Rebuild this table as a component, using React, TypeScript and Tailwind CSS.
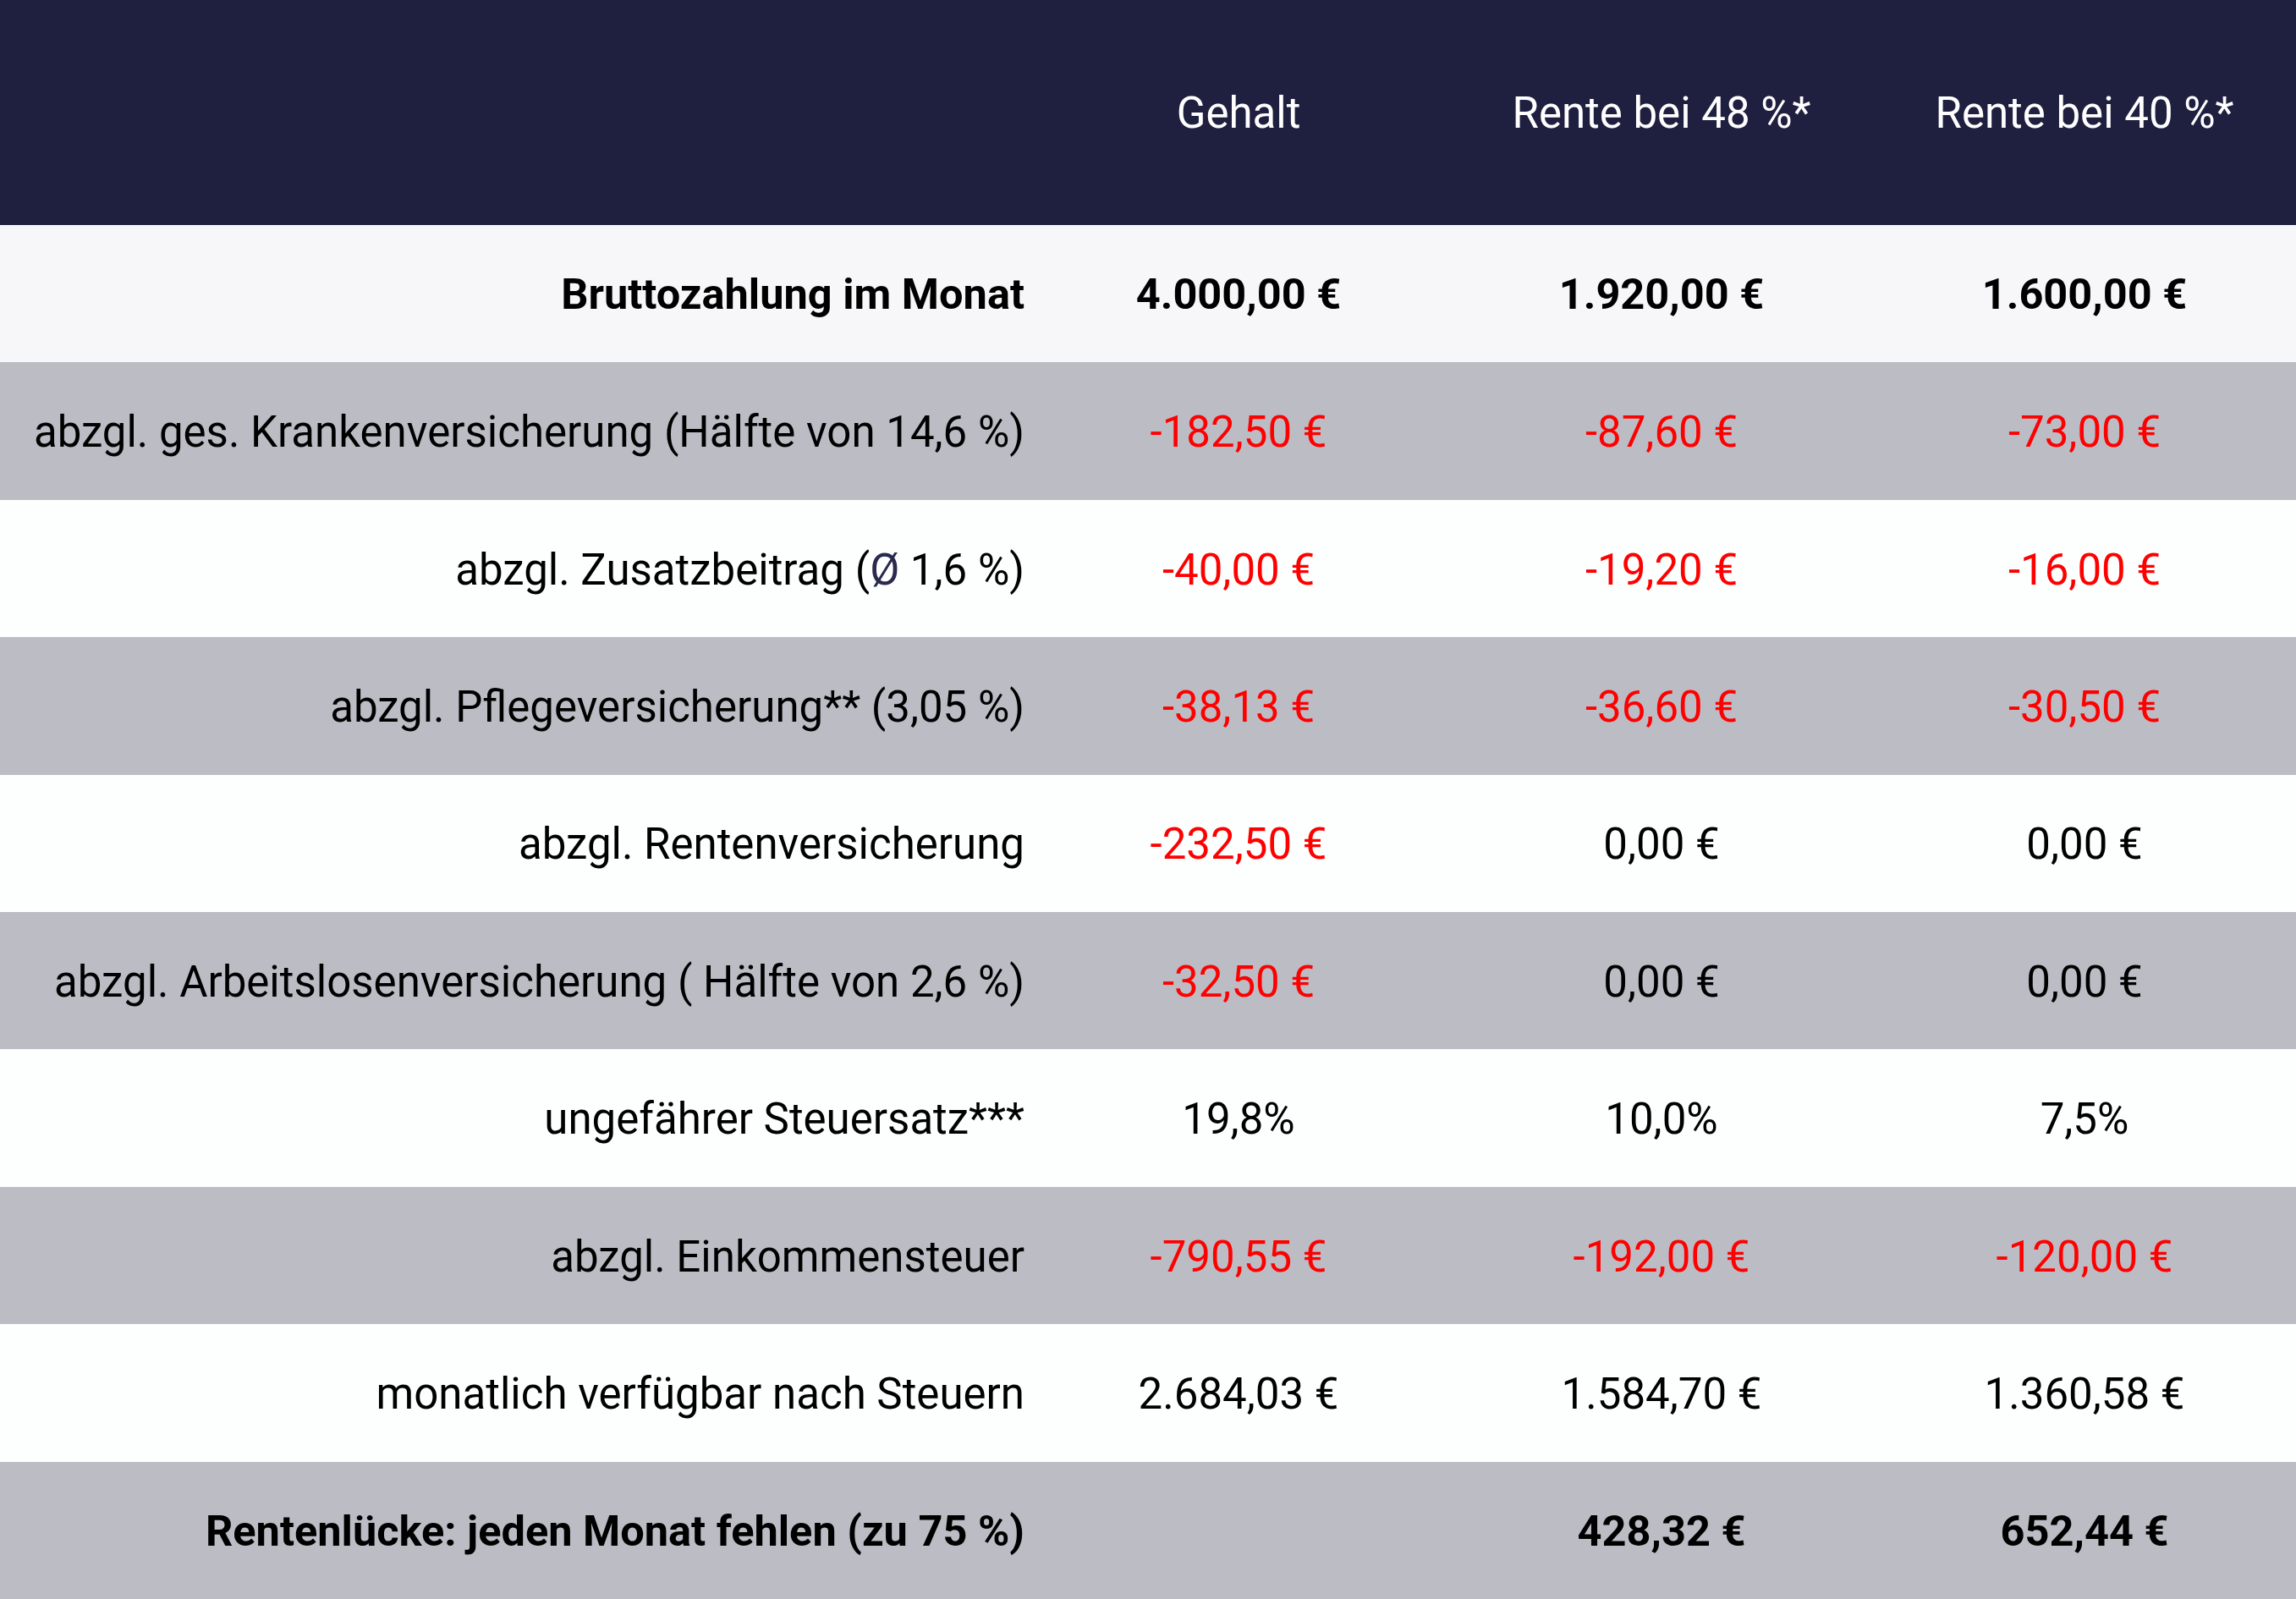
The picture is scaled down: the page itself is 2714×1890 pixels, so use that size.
import React from "react";

type Row = {
  label: React.ReactNode;
  values: [string, string, string];
  bg: string;
  bold?: boolean;
  red?: [boolean, boolean, boolean];
};

const rows: Row[] = [
  { label: "Bruttozahlung im Monat", values: ["4.000,00 €", "1.920,00 €", "1.600,00 €"], bg: "bg-[#f7f7f9]", bold: true },
  { label: "abzgl. ges. Krankenversicherung (Hälfte von 14,6 %)", values: ["-182,50 €", "-87,60 €", "-73,00 €"], bg: "bg-[#bcbcc5]", red: [true, true, true] },
  {
    label: (
      <>
        abzgl. Zusatzbeitrag (<span className="text-[#2a2a4c]">Ø</span> 1,6 %)
      </>
    ),
    values: ["-40,00 €", "-19,20 €", "-16,00 €"],
    bg: "bg-[#fdfefe]",
    red: [true, true, true],
  },
  { label: "abzgl. Pflegeversicherung** (3,05 %)", values: ["-38,13 €", "-36,60 €", "-30,50 €"], bg: "bg-[#bcbcc5]", red: [true, true, true] },
  { label: "abzgl. Rentenversicherung", values: ["-232,50 €", "0,00 €", "0,00 €"], bg: "bg-[#fdfefe]", red: [true, false, false] },
  { label: "abzgl. Arbeitslosenversicherung ( Hälfte von 2,6 %)", values: ["-32,50 €", "0,00 €", "0,00 €"], bg: "bg-[#bcbcc5]", red: [true, false, false] },
  { label: "ungefährer Steuersatz***", values: ["19,8%", "10,0%", "7,5%"], bg: "bg-[#fdfefe]" },
  { label: "abzgl. Einkommensteuer", values: ["-790,55 €", "-192,00 €", "-120,00 €"], bg: "bg-[#bcbcc5]", red: [true, true, true] },
  { label: "monatlich verfügbar nach Steuern", values: ["2.684,03 €", "1.584,70 €", "1.360,58 €"], bg: "bg-[#fdfefe]" },
  { label: "Rentenlücke: jeden Monat fehlen (zu 75 %)", values: ["", "428,32 €", "652,44 €"], bg: "bg-[#bcbcc5]", bold: true },
];

export default function App() {
  return (
    <div className="w-[2714px] h-[1890px] flex flex-col font-['Roboto',sans-serif] text-[51px] text-black leading-none">
      {/* Header */}
      <div className="h-[266px] shrink-0 bg-[#1f2040] text-white flex items-center">
        <div className="w-[1214px]" />
        <div className="w-[500px] text-center">Gehalt</div>
        <div className="w-[500px] text-center">Rente bei 48 %*</div>
        <div className="w-[500px] text-center">Rente bei 40 %*</div>
      </div>

      {/* Rows */}
      {rows.map((r, i) => (
        <div key={i} className={`flex-1 flex items-center ${r.bg} ${r.bold ? "font-bold text-[50.5px]" : ""}`}>
          <div className="w-[1214px] text-right pr-[3px] pt-[2px]">{r.label}</div>
          {r.values.map((v, j) => (
            <div key={j} className={`w-[500px] text-center pt-[2px] ${r.red?.[j] ? "text-[#ff0000]" : ""}`}>
              {v}
            </div>
          ))}
        </div>
      ))}
    </div>
  );
}
